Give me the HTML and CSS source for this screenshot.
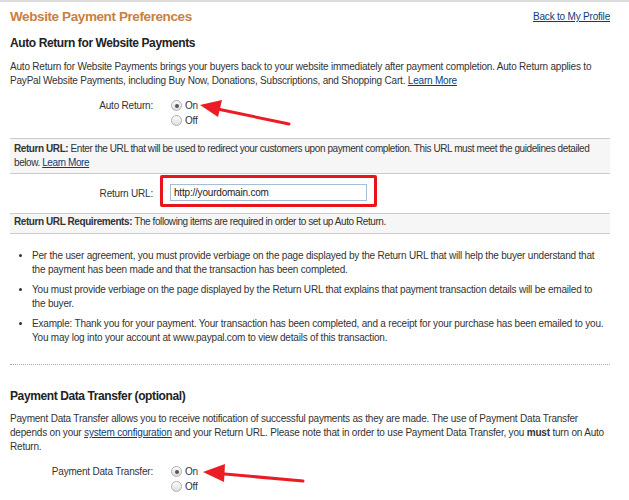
FILE: index.html
```html
<!DOCTYPE html>
<html lang="en">
<head>
  <meta charset="UTF-8" />
  <title>Website Payment Preferences</title>
  <link rel="stylesheet" href="styles.css">
</head>
<body>

  <div class="page">
    <div class="header">
      <h1>Website Payment Preferences</h1>
      <a href="#" class="back-link">Back to My Profile</a>
    </div>

    <h2>Auto Return for Website Payments</h2>
    <p>Auto Return for Website Payments brings your buyers back to your website immediately after payment completion. Auto Return applies to<br>
      PayPal Website Payments, including Buy Now, Donations, Subscriptions, and Shopping Cart. <a href="#">Learn More</a></p>

    <div class="field-row">
      <div class="field-label">Auto Return:</div>
      <div class="options">
        <label class="option"><span class="radio checked"></span>On</label>
        <label class="option"><span class="radio"></span>Off</label>
      </div>
      <svg class="arrow" width="110" height="32" viewBox="0 0 110 32">
        <line x1="20" y1="10.5" x2="94" y2="26" stroke="#ec1c24" stroke-width="3" stroke-linecap="round"/>
        <polygon points="5,7 27,2 23,19" fill="#ec1c24"/>
      </svg>
    </div>

    <div class="note-box">
      <b>Return URL:</b> Enter the URL that will be used to redirect your customers upon payment completion. This URL must meet the guidelines detailed<br>
      below. <a href="#">Learn More</a>
    </div>

    <div class="url-row">
      <div class="field-label">Return URL:</div>
      <div class="highlight">
        <input type="text" class="url-input" value="http://yourdomain.com">
      </div>
    </div>

    <div class="note-box note-short">
      <b>Return URL Requirements:</b> The following items are required in order to set up Auto Return.
    </div>

    <ul class="rules">
      <li>Per the user agreement, you must provide verbiage on the page displayed by the Return URL that will help the buyer understand that<br>
        the payment has been made and that the transaction has been completed.</li>
      <li>You must provide verbiage on the page displayed by the Return URL that explains that payment transaction details will be emailed to<br>
        the buyer.</li>
      <li>Example: Thank you for your payment. Your transaction has been completed, and a receipt for your purchase has been emailed to you.<br>
        You may log into your account at www.paypal.com to view details of this transaction.</li>
    </ul>

    <div class="divider"></div>

    <h2 class="section-two">Payment Data Transfer (optional)</h2>
    <p>Payment Data Transfer allows you to receive notification of successful payments as they are made. The use of Payment Data Transfer<br>
      depends on your <a href="#">system configuration</a> and your Return URL. Please note that in order to use Payment Data Transfer, you <b>must</b> turn on Auto<br>
      Return.</p>

    <div class="field-row">
      <div class="field-label">Payment Data Transfer:</div>
      <div class="options">
        <label class="option"><span class="radio checked"></span>On</label>
        <label class="option"><span class="radio"></span>Off</label>
      </div>
      <svg class="arrow" width="115" height="24" viewBox="0 0 115 24">
        <line x1="24" y1="9.5" x2="108" y2="17" stroke="#ec1c24" stroke-width="3" stroke-linecap="round"/>
        <polygon points="8,8 30,0 29,18" fill="#ec1c24"/>
      </svg>
    </div>
  </div>

</body>
</html>
```

FILE: styles.css
```css
body {
  margin: 0;
  font-family: "Liberation Sans", Arial, sans-serif;
  font-size: 10px;
  letter-spacing: -0.2px;
  color: #333;
  background: #fff;
  border-top: 2px solid #ddd;
}
a {
  color: #0b3d78;
}
.page {
  width: 600px;
  padding: 0 19px 0 10px;
}
.header {
  display: flex;
  justify-content: space-between;
  align-items: flex-start;
  margin-top: 6px;
}
h1 {
  margin: 0;
  font-size: 13.5px;
  line-height: 18px;
  letter-spacing: -0.4px;
  color: #c98040;
}
.back-link {
  line-height: 16px;
  margin-top: 1px;
}
h2 {
  margin: 9px 0 0;
  font-size: 12px;
  line-height: 16px;
  letter-spacing: -0.4px;
  color: #222;
}
p {
  margin: 9px 0 0;
  line-height: 14px;
  white-space: nowrap;
}
.field-row {
  position: relative;
  display: flex;
  margin-top: 9px;
}
.field-label {
  width: 143px;
  text-align: right;
  line-height: 15px;
}
.options {
  margin-left: 18px;
}
.option {
  display: flex;
  align-items: center;
  line-height: 15px;
}
.radio {
  display: inline-block;
  box-sizing: border-box;
  width: 11px;
  height: 11px;
  margin-right: 3px;
  border: 1px solid #b0b0b0;
  border-radius: 50%;
  background: linear-gradient(#fdfdfd, #dedede);
  position: relative;
}
.radio.checked::after {
  content: "";
  position: absolute;
  left: 2.5px;
  top: 2.5px;
  width: 4px;
  height: 4px;
  border-radius: 50%;
  background: #555;
}
.arrow {
  position: absolute;
  left: 185px;
  top: 0;
}
.note-box {
  margin-top: 10px;
  padding: 3px 4px;
  line-height: 14px;
  letter-spacing: -0.42px;
  white-space: nowrap;
  background: #f6f6f6;
  border-top: 1px solid #ccc;
  border-bottom: 1px solid #ccc;
}
.note-short {
  margin-top: 0;
  padding: 1px 4px 4px;
}
.url-row {
  display: flex;
  align-items: center;
  height: 39px;
}
.url-row .field-label {
  margin-top: -1px;
}
.highlight {
  margin-left: 7px;
  margin-top: -6px;
  padding: 6px 7px 3px;
  border: 3px solid #e8141c;
  border-radius: 2px;
}
.url-input {
  display: block;
  box-sizing: border-box;
  width: 197px;
  height: 17px;
  margin: 0;
  padding: 0 3px;
  font-family: "Liberation Sans", Arial, sans-serif;
  font-size: 10px;
  letter-spacing: -0.2px;
  color: #222;
  border: 1px solid #a5bed6;
  outline: none;
}
.rules {
  margin: 15px 0 0;
  padding-left: 22px;
}
.rules li {
  line-height: 14px;
  margin-bottom: 6px;
  white-space: nowrap;
}
.divider {
  margin-top: 19px;
  border-top: 1px dotted #aaa;
}
.section-two {
  margin-top: 23px;
}
.section-two + p {
  margin-top: 8px;
}
p + .field-row {
  margin-top: 10px;
}
```
